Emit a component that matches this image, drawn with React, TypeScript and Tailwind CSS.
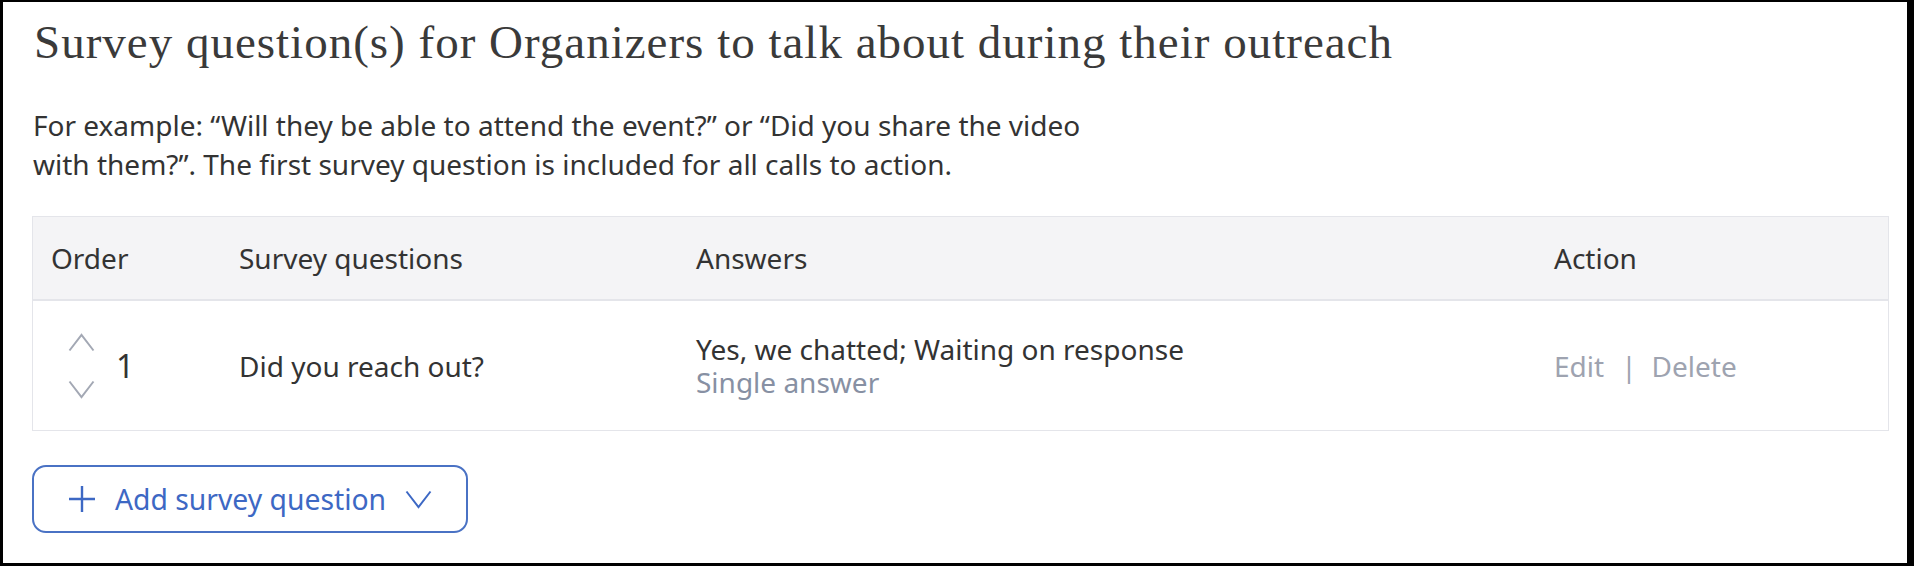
import React from 'react';

const ChevronUp: React.FC<{ className?: string }> = ({ className }) => (
  <svg className={className} width="27" height="19" viewBox="0 0 27 19" fill="none">
    <path d="M1.5 17.5 L13.5 2 L25.5 17.5" stroke="currentColor" strokeWidth="2" />
  </svg>
);

const ChevronDown: React.FC<{ className?: string }> = ({ className }) => (
  <svg className={className} width="27" height="19" viewBox="0 0 27 19" fill="none">
    <path d="M1.5 1.5 L13.5 17 L25.5 1.5" stroke="currentColor" strokeWidth="2" />
  </svg>
);

const PlusIcon: React.FC = () => (
  <svg width="26" height="26" viewBox="0 0 26 26" fill="none">
    <path d="M13 0 V26 M0 13 H26" stroke="currentColor" strokeWidth="2.4" />
  </svg>
);

const rows = [
  {
    order: 1,
    question: 'Did you reach out?',
    answers: 'Yes, we chatted; Waiting on response',
    type: 'Single answer',
  },
];

export default function App() {
  return (
    <div className="h-[566px] w-full overflow-hidden border-t-2 border-l-[3px] border-r-[7px] border-b-[3px] border-black bg-white pt-[14px] pl-[29px] pr-[18px] text-[#333] font-['Noto_Sans',sans-serif]">
      <h1 className="pl-[2px] font-['Liberation_Serif',serif] text-[47px] leading-[52px] tracking-[1px] text-[#3a3a3a]">
        Survey question(s) for Organizers to talk about during their outreach
      </h1>

      <p className="mt-[38px] max-w-[1075px] pl-[1px] text-[28px] leading-[39px]">
        For example: “Will they be able to attend the event?” or “Did you share the video with them?”. The first survey
        question is included for all calls to action.
      </p>

      <div className="mt-[32px] border border-[#e4e5ea]">
        <div className="grid h-[84px] grid-cols-[188px_457px_858px_1fr] items-center border-b-2 border-[#e4e5ea] bg-[#f4f4f6] text-[28px]">
          <div className="pl-[18px]">Order</div>
          <div className="pl-[18px]">Survey questions</div>
          <div className="pl-[18px]">Answers</div>
          <div className="pl-[18px]">Action</div>
        </div>
        {rows.map((r) => (
          <div key={r.order} className="grid h-[129px] grid-cols-[188px_457px_858px_1fr] items-center text-[28px]">
            <div className="flex items-center pl-[35px]">
              <div className="flex flex-col gap-[28px] text-[#a3a8b4]">
                <ChevronUp />
                <ChevronDown />
              </div>
              <span className="ml-[21px] text-[32px] leading-none">{r.order}</span>
            </div>
            <div className="pl-[18px]">{r.question}</div>
            <div className="pl-[18px] leading-[33px]">
              <div>{r.answers}</div>
              <div className="text-[#8790a3]">{r.type}</div>
            </div>
            <div className="flex items-center pl-[18px] text-[#9ea3b0]">
              <span>Edit</span>
              <span className="ml-[17px] mr-[15px]">|</span>
              <span>Delete</span>
            </div>
          </div>
        ))}
      </div>

      <button className="mt-[34px] flex h-[68px] items-center rounded-[14px] border-2 border-[#4a72c4] pl-[35px] pr-[34px] text-[28.3px] text-[#3d68c4]">
        <PlusIcon />
        <span className="ml-[20px]">Add survey question</span>
        <ChevronDown className="ml-[19px]" />
      </button>
    </div>
  );
}
